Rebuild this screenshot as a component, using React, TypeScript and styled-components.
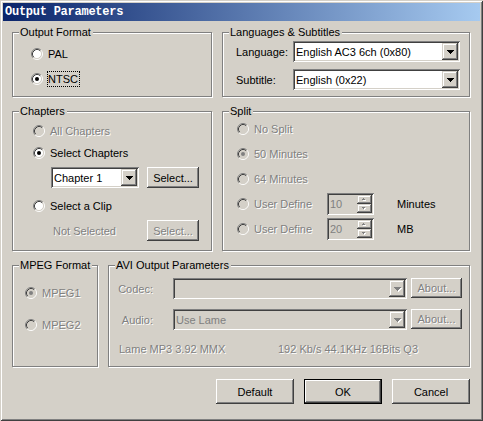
import React from "react";
import styled, { createGlobalStyle, css } from "styled-components";

const FACE = "#d4d0c8";
const SHADOW = "#808080";
const DARK = "#404040";
const HI = "#ffffff";

const GlobalStyle = createGlobalStyle`
  html, body { margin: 0; padding: 0; background: ${FACE}; }
  body { font-family: "Liberation Sans", Arial, sans-serif; font-size: 11px; color: #000; }
  *, *::before, *::after { box-sizing: border-box; }
`;

const disabledText = css`
  color: ${SHADOW};
  text-shadow: 1px 1px 0 ${HI};
`;

const raised = css`
  box-shadow: inset -1px -1px 0 ${DARK}, inset 1px 1px 0 ${HI},
    inset -2px -2px 0 ${SHADOW}, inset 2px 2px 0 ${FACE};
`;
const raisedScroll = css`
  box-shadow: inset -1px -1px 0 ${DARK}, inset 1px 1px 0 ${FACE},
    inset -2px -2px 0 ${SHADOW}, inset 2px 2px 0 ${HI};
`;
const sunken = css`
  box-shadow: inset 1px 1px 0 ${SHADOW}, inset -1px -1px 0 ${HI},
    inset 2px 2px 0 ${DARK}, inset -2px -2px 0 ${FACE};
`;

const Window = styled.div`
  width: 483px;
  height: 421px;
  padding: 3px;
  background: ${FACE};
  box-shadow: inset 1px 1px 0 ${FACE}, inset -1px -1px 0 ${DARK},
    inset 2px 2px 0 ${HI}, inset -2px -2px 0 ${SHADOW};
  display: flex;
  flex-direction: column;
`;

const TitleBar = styled.div`
  height: 18px;
  flex: none;
  display: flex;
  align-items: center;
  padding-left: 2px;
  background: linear-gradient(to right, #0a246a, #a6caf0);
  color: #fff;
  font-family: "Liberation Mono", "Courier New", monospace;
  font-weight: bold;
  font-size: 12px;
  letter-spacing: -0.25px;
  white-space: nowrap;
`;

const Body = styled.div`
  flex: 1;
  display: flex;
  flex-direction: column;
  gap: 8px;
  padding: 5px 10px 0 9px;
`;

const Row = styled.div`
  display: flex;
  align-items: flex-start;
  gap: 10px;
`;

const Frame = styled.section<{ $w: number; $h: number }>`
  position: relative;
  margin-top: 6px;
  width: ${(p) => p.$w}px;
  height: ${(p) => p.$h}px;
  border: 1px solid ${SHADOW};
  box-shadow: inset 1px 1px 0 ${HI}, 1px 1px 0 ${HI};
`;

const Legend = styled.span`
  position: absolute;
  top: -7px;
  left: 6px;
  padding: 0 2px 0 1px;
  line-height: 13px;
  background: ${FACE};
  white-space: nowrap;
`;

/* ---------- radio ---------- */

const RadioRow = styled.label<{ $disabled?: boolean }>`
  display: flex;
  align-items: center;
  gap: 4px;
  height: 16px;
  white-space: nowrap;
  ${(p) => p.$disabled && disabledText}
`;

const RadioText = styled.span<{ $focus?: boolean }>`
  line-height: 14px;
  border: 1px dotted ${(p) => (p.$focus ? "#000" : "transparent")};
  padding-right: 1px;
`;

const RadioGlyph: React.FC<{ checked?: boolean; disabled?: boolean }> = ({ checked, disabled }) => (
  <svg width="12" height="12" viewBox="0 0 12 12" style={{ flex: "none" }}>
    <circle cx="6" cy="6" r="4.5" fill={disabled ? FACE : HI} />
    <path d="M2.11 9.89A5.5 5.5 0 0 1 9.89 2.11" stroke={SHADOW} fill="none" />
    <path d="M9.89 2.11A5.5 5.5 0 0 1 2.11 9.89" stroke={HI} fill="none" />
    <path d="M2.82 9.18A4.5 4.5 0 0 1 9.18 2.82" stroke={DARK} fill="none" />
    <path d="M9.18 2.82A4.5 4.5 0 0 1 2.82 9.18" stroke={FACE} fill="none" />
    {checked && <circle cx="6" cy="6" r="2" fill={disabled ? SHADOW : "#000"} />}
  </svg>
);

const Radio: React.FC<{
  checked?: boolean;
  disabled?: boolean;
  focus?: boolean;
  width?: number;
  children: React.ReactNode;
}> = ({ checked, disabled, focus, width, children }) => (
  <RadioRow $disabled={disabled} style={width ? { width } : undefined}>
    <RadioGlyph checked={checked} disabled={disabled} />
    <RadioText $focus={focus}>{children}</RadioText>
  </RadioRow>
);

/* ---------- arrows ---------- */

const DownTriangle: React.FC<{ disabled?: boolean }> = ({ disabled }) => {
  const rows = [
    [0, 7],
    [1, 5],
    [2, 3],
    [3, 1],
  ];
  return (
    <svg width="8" height="5" viewBox="0 0 8 5">
      {disabled &&
        rows.map(([i, w]) => <rect key={"s" + i} x={i + 1} y={i + 1} width={w} height={1} fill={HI} />)}
      {rows.map(([i, w]) => (
        <rect key={i} x={i} y={i} width={w} height={1} fill={disabled ? SHADOW : "#000"} />
      ))}
    </svg>
  );
};

const SmallArrow: React.FC<{ up?: boolean }> = ({ up }) => {
  const rows = up
    ? [
        [1, 0, 1],
        [0, 1, 3],
      ]
    : [
        [0, 0, 3],
        [1, 1, 1],
      ];
  return (
    <svg width="5" height="3" viewBox="0 0 5 3">
      {rows.map(([x, y, w]) => (
        <rect key={"s" + y} x={x + 1} y={y + 1} width={w} height={1} fill={HI} />
      ))}
      {rows.map(([x, y, w]) => (
        <rect key={y} x={x} y={y} width={w} height={1} fill={SHADOW} />
      ))}
    </svg>
  );
};

/* ---------- combo ---------- */

const ComboBox = styled.div<{ $w: number; $disabled?: boolean }>`
  width: ${(p) => p.$w}px;
  height: 21px;
  flex: none;
  padding: 2px;
  display: flex;
  align-items: stretch;
  background: ${(p) => (p.$disabled ? FACE : HI)};
  ${sunken}
`;

const ComboText = styled.span<{ $disabled?: boolean }>`
  flex: 1;
  display: flex;
  align-items: center;
  padding-left: 1px;
  white-space: nowrap;
  overflow: hidden;
  ${(p) => p.$disabled && `color: ${SHADOW};`}
`;

const ArrowButton = styled.span`
  width: 16px;
  flex: none;
  display: flex;
  align-items: center;
  justify-content: center;
  padding: 1px 0 0 1px;
  background: ${FACE};
  ${raisedScroll}
`;

const Combo: React.FC<{ width: number; value?: string; disabled?: boolean }> = ({
  width,
  value,
  disabled,
}) => (
  <ComboBox $w={width} $disabled={disabled}>
    <ComboText $disabled={disabled}>{value}</ComboText>
    <ArrowButton>
      <DownTriangle disabled={disabled} />
    </ArrowButton>
  </ComboBox>
);

/* ---------- spin ---------- */

const SpinBox = styled.div`
  width: 47px;
  height: 22px;
  flex: none;
  padding: 2px;
  display: flex;
  background: ${FACE};
  ${sunken}
`;

const SpinText = styled.span`
  flex: 1;
  display: flex;
  align-items: center;
  padding-left: 1px;
  font-size: 11px;
  color: ${SHADOW};
`;

const SpinButtons = styled.span`
  width: 15px;
  display: flex;
  flex-direction: column;
`;

const SpinButton = styled.span`
  height: 9px;
  display: flex;
  align-items: center;
  justify-content: center;
  background: ${FACE};
  ${raisedScroll}
`;

const Spin: React.FC<{ value: string }> = ({ value }) => (
  <SpinBox>
    <SpinText>{value}</SpinText>
    <SpinButtons>
      <SpinButton>
        <SmallArrow up />
      </SpinButton>
      <SpinButton>
        <SmallArrow />
      </SpinButton>
    </SpinButtons>
  </SpinBox>
);

/* ---------- buttons ---------- */

const PushButton = styled.button<{ $w: number; $h: number; $default?: boolean }>`
  width: ${(p) => p.$w}px;
  height: ${(p) => p.$h}px;
  flex: none;
  margin: 0;
  padding: 0;
  font-family: "Liberation Sans", Arial, sans-serif;
  font-size: 11px;
  color: #000;
  background: ${FACE};
  border: ${(p) => (p.$default ? "1px solid #000" : "none")};
  ${raised}
  &:disabled {
    ${disabledText}
  }
`;

/* ---------- group contents ---------- */

const OutputFormatBody = styled.div`
  display: flex;
  flex-direction: column;
  gap: 9px;
  padding: 13px 0 0 18px;
`;

const LangGrid = styled.div`
  display: grid;
  grid-template-columns: 57px 167px;
  row-gap: 7px;
  align-items: center;
  padding: 8px 0 0 13px;
`;

const FieldLabel = styled.span<{ $disabled?: boolean; $align?: string }>`
  white-space: nowrap;
  text-align: ${(p) => p.$align || "left"};
  ${(p) => p.$disabled && disabledText}
`;

const ChaptersBody = styled.div`
  display: flex;
  flex-direction: column;
  gap: 6px;
  padding: 11px 0 0 20px;
`;

const IndentRow = styled.div<{ $gapTop?: number }>`
  display: grid;
  grid-template-columns: 88px 52px;
  column-gap: 8px;
  align-items: center;
  margin-left: 18px;
  margin-top: ${(p) => p.$gapTop || 0}px;
`;

const NotSelected = styled.span`
  padding-left: 2px;
  white-space: nowrap;
  ${disabledText}
`;

const SplitBody = styled.div`
  display: flex;
  flex-direction: column;
  gap: 3px;
  padding: 6px 0 0 14px;
`;

const SplitRow = styled.div`
  height: 22px;
  display: flex;
  align-items: center;
`;

const Unit = styled.span`
  margin-left: 23px;
`;

const MpegBody = styled.div`
  display: flex;
  flex-direction: column;
  gap: 16px;
  padding: 19px 0 0 12px;
`;

const AviBody = styled.div`
  display: flex;
  flex-direction: column;
  padding: 12px 0 0 10px;
`;

const AviRow = styled.div<{ $mt?: number }>`
  display: flex;
  align-items: flex-start;
  margin-top: ${(p) => p.$mt || 0}px;
`;

const AviLabel = styled.span`
  width: 34px;
  height: 21px;
  margin-right: 20px;
  display: flex;
  align-items: center;
  justify-content: flex-end;
  white-space: nowrap;
  ${disabledText}
`;

const AboutSlot = styled.span`
  margin-left: 4px;
  display: flex;
`;

const InfoRow = styled.div`
  display: flex;
  height: 14px;
  align-items: center;
  margin-top: 12px;
  white-space: nowrap;
  ${disabledText}
`;

const InfoCell = styled.span<{ $w?: number }>`
  ${(p) => (p.$w ? `width: ${p.$w}px;` : "")}
`;

const ButtonRow = styled.div`
  display: flex;
  justify-content: flex-end;
  gap: 10px;
  margin-top: 4px;
`;

export default function App() {
  return (
    <>
      <GlobalStyle />
      <Window>
        <TitleBar>Output Parameters</TitleBar>
        <Body>
          <Row>
            <Frame $w={200} $h={65}>
              <Legend>Output Format</Legend>
              <OutputFormatBody>
                <Radio>PAL</Radio>
                <Radio checked focus>
                  NTSC
                </Radio>
              </OutputFormatBody>
            </Frame>
            <Frame $w={248} $h={65}>
              <Legend>Languages &amp; Subtitles</Legend>
              <LangGrid>
                <FieldLabel>Language:</FieldLabel>
                <Combo width={167} value="English AC3 6ch (0x80)" />
                <FieldLabel>Subtitle:</FieldLabel>
                <Combo width={167} value="English (0x22)" />
              </LangGrid>
            </Frame>
          </Row>

          <Row>
            <Frame $w={200} $h={140}>
              <Legend>Chapters</Legend>
              <ChaptersBody>
                <Radio disabled>All Chapters</Radio>
                <Radio checked>Select Chapters</Radio>
                <IndentRow>
                  <Combo width={88} value="Chapter 1" />
                  <PushButton $w={52} $h={21}>
                    Select...
                  </PushButton>
                </IndentRow>
                <div style={{ marginTop: 4 }}>
                  <Radio>Select a Clip</Radio>
                </div>
                <IndentRow>
                  <NotSelected>Not Selected</NotSelected>
                  <PushButton $w={52} $h={21} disabled>
                    Select...
                  </PushButton>
                </IndentRow>
              </ChaptersBody>
            </Frame>
            <Frame $w={248} $h={140}>
              <Legend>Split</Legend>
              <SplitBody>
                <SplitRow>
                  <Radio disabled>No Split</Radio>
                </SplitRow>
                <SplitRow>
                  <Radio disabled checked>
                    50 Minutes
                  </Radio>
                </SplitRow>
                <SplitRow>
                  <Radio disabled>64 Minutes</Radio>
                </SplitRow>
                <SplitRow>
                  <Radio disabled width={90}>
                    User Define
                  </Radio>
                  <Spin value="10" />
                  <Unit>Minutes</Unit>
                </SplitRow>
                <SplitRow>
                  <Radio disabled width={90}>
                    User Define
                  </Radio>
                  <Spin value="20" />
                  <Unit>MB</Unit>
                </SplitRow>
              </SplitBody>
            </Frame>
          </Row>

          <Row>
            <Frame $w={86} $h={102}>
              <Legend>MPEG Format</Legend>
              <MpegBody>
                <Radio disabled checked>
                  MPEG1
                </Radio>
                <Radio disabled>MPEG2</Radio>
              </MpegBody>
            </Frame>
            <Frame $w={362} $h={102}>
              <Legend>AVI Output Parameters</Legend>
              <AviBody>
                <AviRow>
                  <AviLabel>Codec:</AviLabel>
                  <Combo width={234} disabled />
                  <AboutSlot>
                    <PushButton $w={51} $h={20} disabled>
                      About...
                    </PushButton>
                  </AboutSlot>
                </AviRow>
                <AviRow $mt={10}>
                  <AviLabel>Audio:</AviLabel>
                  <Combo width={234} value="Use Lame" disabled />
                  <AboutSlot>
                    <PushButton $w={51} $h={20} disabled>
                      About...
                    </PushButton>
                  </AboutSlot>
                </AviRow>
                <InfoRow>
                  <InfoCell $w={159}>Lame MP3 3.92 MMX</InfoCell>
                  <InfoCell>192 Kb/s 44.1KHz 16Bits Q3</InfoCell>
                </InfoRow>
              </AviBody>
            </Frame>
          </Row>

          <ButtonRow>
            <PushButton $w={78} $h={25}>
              Default
            </PushButton>
            <PushButton $w={78} $h={25} $default>
              OK
            </PushButton>
            <PushButton $w={78} $h={25}>
              Cancel
            </PushButton>
          </ButtonRow>
        </Body>
      </Window>
    </>
  );
}
